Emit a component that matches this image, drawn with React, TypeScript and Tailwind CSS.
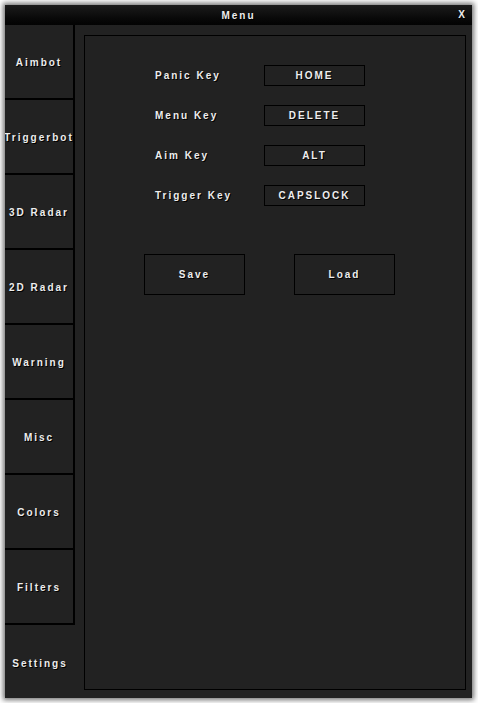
import React from "react";

const tabs = ["Aimbot", "Triggerbot", "3D Radar", "2D Radar", "Warning", "Misc", "Colors", "Filters"];
const keys: [string, string][] = [
  ["Panic Key", "HOME"],
  ["Menu Key", "DELETE"],
  ["Aim Key", "ALT"],
  ["Trigger Key", "CAPSLOCK"],
];

const txt =
  "font-['Liberation_Sans',Arial,sans-serif] font-bold text-[10px] leading-[12px] tracking-[0.2em] text-[#ededed] [text-shadow:1px_1px_0_#000]";

export default function App() {
  return (
    <div className="w-[478px] h-[703px] bg-white pt-[5px] pl-[5px]">
      <div className="w-[467px] h-[693px] bg-[#222222] flex flex-col shadow-[0_0_5px_2px_rgba(0,0,0,0.55)] overflow-hidden">
        <div className="h-5 shrink-0 bg-gradient-to-b from-[#1c1c1c] to-[#030303] flex items-center relative">
          <div className={`${txt} w-full text-center pt-[1px]`}>Menu</div>
          <div className={`${txt} absolute right-[5px] top-[4px]`}>X</div>
        </div>
        <div className="flex flex-1 min-h-0">
          <div className="w-[70px] shrink-0 flex flex-col">
            {tabs.map((t) => (
              <div
                key={t}
                className={`h-[75px] shrink-0 border-r-2 border-b-2 border-black flex items-center justify-center pt-[2px] whitespace-nowrap ${txt}`}
              >
                {t}
              </div>
            ))}
            <div className={`h-[75px] shrink-0 flex items-center justify-center pt-[2px] ${txt}`}>Settings</div>
          </div>
          <div className="ml-[9px] mt-[10px] mb-[8px] w-[382px] border-[1.5px] border-black flex flex-col pt-[29px] pl-[70px]">
            <div className="flex flex-col gap-[19px]">
              {keys.map(([l, v]) => (
                <div key={l} className="flex items-center h-[21px]">
                  <div className={`w-[109px] ${txt}`}>{l}</div>
                  <div className={`w-[101px] h-[21px] border-[1.5px] border-black flex items-center justify-center ${txt}`}>
                    {v}
                  </div>
                </div>
              ))}
            </div>
            <div className="flex gap-[49px] mt-[48px] ml-[-11px]">
              {["Save", "Load"].map((b) => (
                <div
                  key={b}
                  className={`w-[101px] h-[41px] border-[1.5px] border-black flex items-center justify-center ${txt}`}
                >
                  {b}
                </div>
              ))}
            </div>
          </div>
        </div>
      </div>
    </div>
  );
}
